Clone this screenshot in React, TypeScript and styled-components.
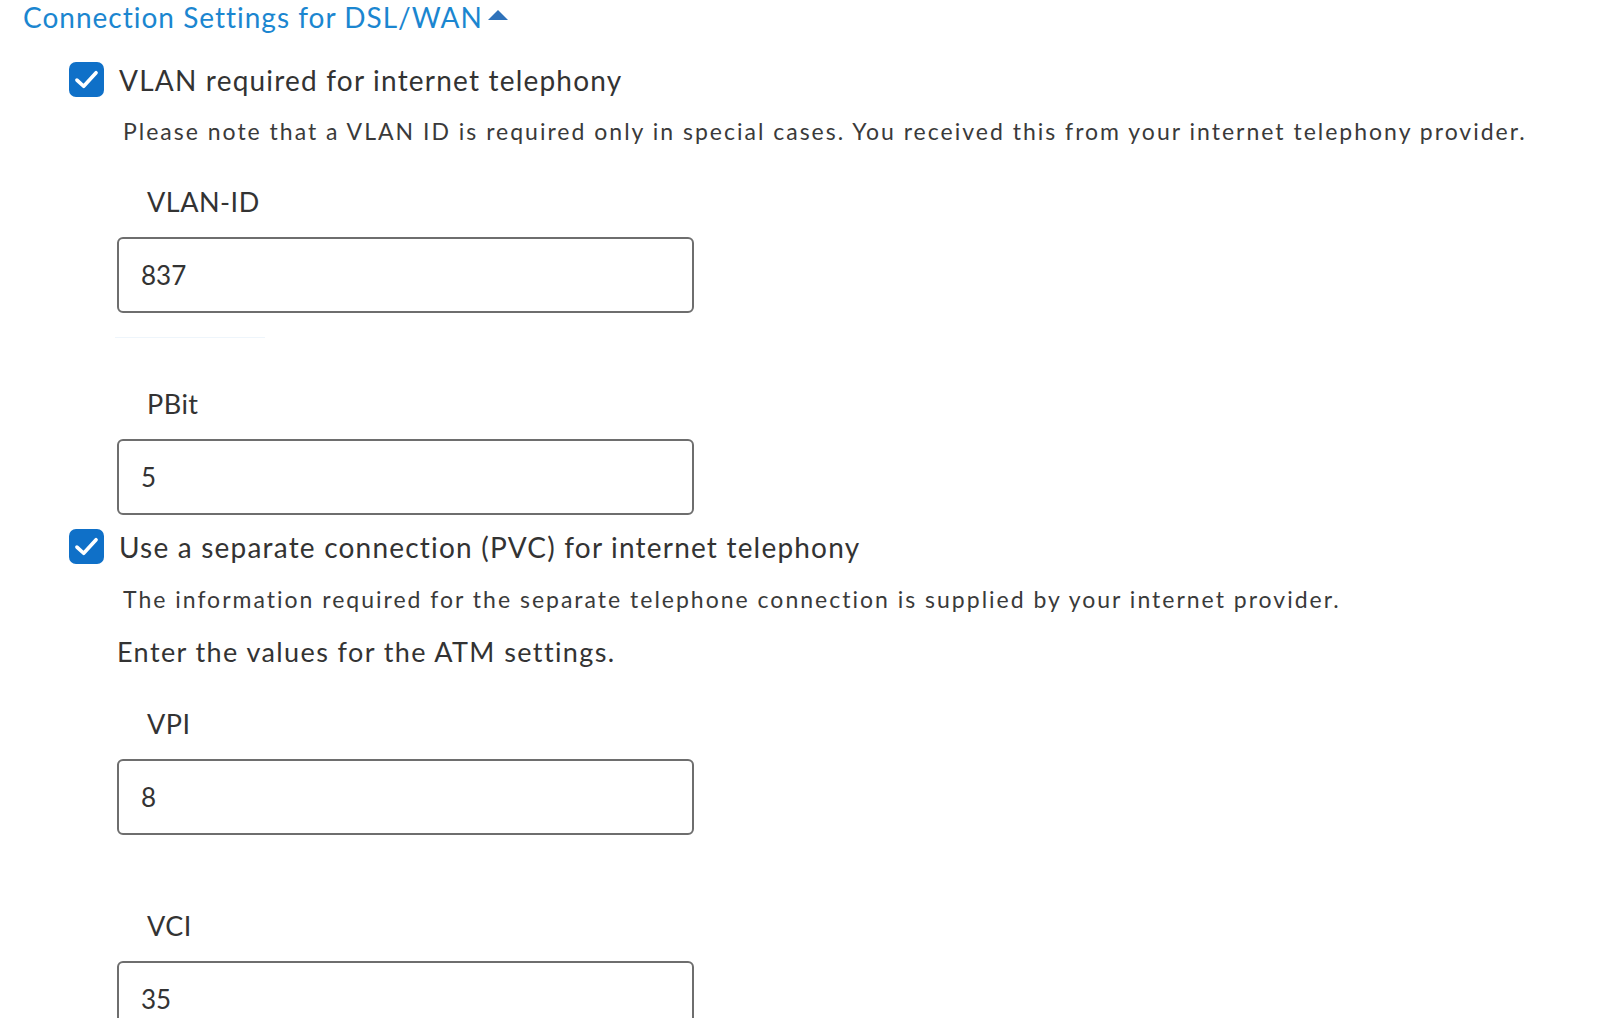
import React, { useState } from 'react';
import styled, { createGlobalStyle } from 'styled-components';

const GlobalStyle = createGlobalStyle`
  html, body {
    margin: 0;
    padding: 0;
    background: #ffffff;
  }
  body {
    font-family: Lato, "Noto Sans", "Liberation Sans", sans-serif;
    color: #333333;
  }
`;

const Page = styled.div`
  width: 1600px;
  height: 1018px;
  overflow: hidden;
  box-sizing: border-box;
  padding: 0 0 0 23px;
`;

const SectionToggle = styled.button`
  display: flex;
  align-items: center;
  gap: 5px;
  background: none;
  border: none;
  padding: 0;
  margin: 0;
  height: 34px;
  font-family: inherit;
  font-size: 28px;
  letter-spacing: 1px;
  color: #1b86d0;
  cursor: pointer;
`;

const Caret = styled.span`
  width: 0;
  height: 0;
  border-left: 10px solid transparent;
  border-right: 10px solid transparent;
  border-bottom: 10px solid #2f72ba;
  margin-top: -5px;
`;

const Section = styled.div`
  padding-left: 46px;
`;

const CheckRow = styled.label<{ $top: number }>`
  display: flex;
  align-items: center;
  gap: 15px;
  margin-top: ${(p) => p.$top}px;
  height: 35px;
  font-size: 28px;
  letter-spacing: 1.2px;
  color: #333333;
  cursor: pointer;
`;

const Box = styled.span<{ $checked: boolean }>`
  display: flex;
  align-items: center;
  justify-content: center;
  width: 35px;
  height: 35px;
  border-radius: 7px;
  box-sizing: border-box;
  background: ${(p) => (p.$checked ? '#0f70c8' : '#ffffff')};
  border: ${(p) => (p.$checked ? 'none' : '2px solid #707070')};
  flex-shrink: 0;
`;

const Hint = styled.p<{ $top: number }>`
  margin: ${(p) => p.$top}px 0 0 54px;
  line-height: 30px;
  font-size: 23px;
  letter-spacing: 2px;
  color: #3a3a3a;
  white-space: nowrap;
`;

const Details = styled.div`
  padding-left: 48px;
`;

const Note = styled.p`
  margin: 21px 0 0;
  line-height: 34px;
  font-size: 27px;
  letter-spacing: 1.4px;
  color: #333333;
`;

const Field = styled.div<{ $top: number; $last?: boolean }>`
  margin-top: ${(p) => p.$top}px;
  margin-bottom: ${(p) => (p.$last ? 0 : 71)}px;
`;

const FieldLabel = styled.label`
  display: block;
  padding-left: 30px;
  line-height: 40px;
  font-size: 27px;
  letter-spacing: 0.5px;
  color: #333333;
  margin-bottom: 15px;
`;

const TextInput = styled.input`
  display: block;
  box-sizing: border-box;
  width: 577px;
  height: 76px;
  border: 2px solid #6e6e6e;
  border-radius: 6px;
  padding: 0 22px;
  font-family: inherit;
  font-size: 26px;
  color: #333333;
  background: #ffffff;
  outline: none;
`;

const FaintRule = styled.div`
  width: 150px;
  margin: 24px 0 -25px -2px;
  border-top: 1px solid #eef5fb;
`;

const Check = ({ checked }: { checked: boolean }) => (
  <Box $checked={checked}>
    {checked && (
      <svg width="27" height="27" viewBox="0 0 24 24" fill="none">
        <polyline
          points="3.5,12.5 9.5,18 20.5,6"
          stroke="#ffffff"
          strokeWidth="3.2"
          strokeLinecap="round"
          strokeLinejoin="round"
        />
      </svg>
    )}
  </Box>
);

const App: React.FC = () => {
  const [open, setOpen] = useState(true);
  const [vlan, setVlan] = useState(true);
  const [pvc, setPvc] = useState(true);
  const [values, setValues] = useState({ vlanId: '837', pbit: '5', vpi: '8', vci: '35' });

  const update = (key: keyof typeof values) => (e: React.ChangeEvent<HTMLInputElement>) =>
    setValues({ ...values, [key]: e.target.value });

  return (
    <Page>
      <GlobalStyle />
      <SectionToggle onClick={() => setOpen(!open)}>
        Connection Settings for DSL/WAN
        <Caret />
      </SectionToggle>
      {open && (
        <Section>
          <CheckRow $top={28} onClick={() => setVlan(!vlan)}>
            <Check checked={vlan} />
            VLAN required for internet telephony
          </CheckRow>
          <Hint $top={19}>
            Please note that a VLAN ID is required only in special cases. You received this from your internet telephony provider.
          </Hint>
          <Details>
            <Field $top={36}>
              <FieldLabel>VLAN-ID</FieldLabel>
              <TextInput value={values.vlanId} onChange={update('vlanId')} />
              <FaintRule />
            </Field>
            <Field $top={0} $last>
              <FieldLabel>PBit</FieldLabel>
              <TextInput value={values.pbit} onChange={update('pbit')} />
            </Field>
          </Details>
          <CheckRow $top={14} onClick={() => setPvc(!pvc)}>
            <Check checked={pvc} />
            Use a separate connection (PVC) for internet telephony
          </CheckRow>
          <Hint $top={20}>
            The information required for the separate telephone connection is supplied by your internet provider.
          </Hint>
          <Details>
            <Note>Enter the values for the ATM settings.</Note>
            <Field $top={35}>
              <FieldLabel>VPI</FieldLabel>
              <TextInput value={values.vpi} onChange={update('vpi')} />
            </Field>
            <Field $top={0} $last>
              <FieldLabel>VCI</FieldLabel>
              <TextInput value={values.vci} onChange={update('vci')} />
            </Field>
          </Details>
        </Section>
      )}
    </Page>
  );
};

export default App;
